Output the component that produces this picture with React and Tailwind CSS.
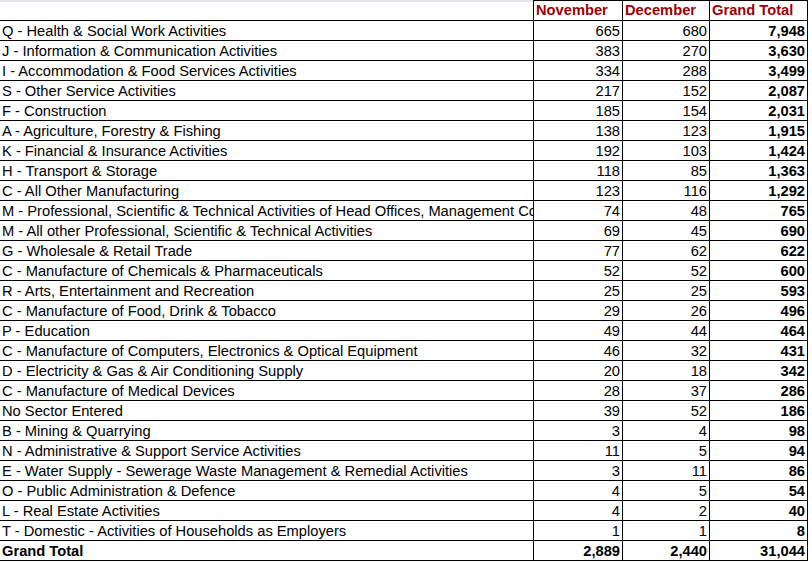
import React from 'react'

const ROWS = [
  ['Q - Health & Social Work Activities', '665', '680', '7,948'],
  ['J - Information & Communication Activities', '383', '270', '3,630'],
  ['I - Accommodation & Food Services Activities', '334', '288', '3,499'],
  ['S - Other Service Activities', '217', '152', '2,087'],
  ['F - Construction', '185', '154', '2,031'],
  ['A - Agriculture, Forestry & Fishing', '138', '123', '1,915'],
  ['K - Financial & Insurance Activities', '192', '103', '1,424'],
  ['H - Transport & Storage', '118', '85', '1,363'],
  ['C - All Other Manufacturing', '123', '116', '1,292'],
  [
    'M - Professional, Scientific & Technical Activities of Head Offices, Management Consultancy',
    '74',
    '48',
    '765',
  ],
  ['M - All other Professional, Scientific & Technical Activities', '69', '45', '690'],
  ['G - Wholesale & Retail Trade', '77', '62', '622'],
  ['C - Manufacture of Chemicals & Pharmaceuticals', '52', '52', '600'],
  ['R - Arts, Entertainment and Recreation', '25', '25', '593'],
  ['C - Manufacture of Food, Drink & Tobacco', '29', '26', '496'],
  ['P - Education', '49', '44', '464'],
  ['C - Manufacture of Computers, Electronics & Optical Equipment', '46', '32', '431'],
  ['D - Electricity & Gas & Air Conditioning Supply', '20', '18', '342'],
  ['C - Manufacture of Medical Devices', '28', '37', '286'],
  ['No Sector Entered', '39', '52', '186'],
  ['B - Mining & Quarrying', '3', '4', '98'],
  ['N - Administrative & Support Service Activities', '11', '5', '94'],
  ['E - Water Supply - Sewerage Waste Management & Remedial Activities', '3', '11', '86'],
  ['O - Public Administration & Defence', '4', '5', '54'],
  ['L - Real Estate Activities', '4', '2', '40'],
  ['T - Domestic - Activities of Households as Employers', '1', '1', '8'],
]

const cellNum = 'h-full border-l border-b border-black flex items-end justify-end pr-[2px]'

function Row({ label, nov, dec, total, bold }) {
  return (
    <div className="flex h-[20px] leading-[17px]">
      <div
        className={`w-[533px] h-full border-b border-black flex items-end pl-[2px] overflow-hidden whitespace-nowrap ${bold ? 'font-bold' : ''}`}
      >
        {label}
      </div>
      <div className={`w-[89px] ${cellNum} ${bold ? 'font-bold' : ''}`}>{nov}</div>
      <div className={`w-[87px] ${cellNum} ${bold ? 'font-bold' : ''}`}>{dec}</div>
      <div className={`w-[99px] ${cellNum} border-r font-bold`}>{total}</div>
    </div>
  )
}

export default function App() {
  return (
    <div className="w-[812px] h-[563px] bg-white text-black text-[14.7px] font-['Liberation_Sans',Arial,sans-serif] overflow-hidden">
      <div className="flex h-[21px] leading-[17px] font-bold text-[#9c0006]">
        <div className="w-[533px] h-full border-t-2 border-t-[#e3e6ec] border-b border-b-black" />
        <div className="w-[89px] h-full border-l border-t border-b border-black flex items-end pl-[2px] pb-[1px] whitespace-nowrap">
          November
        </div>
        <div className="w-[87px] h-full border-l border-t border-b border-black flex items-end pl-[2px] pb-[1px] whitespace-nowrap">
          December
        </div>
        <div className="w-[99px] h-full border-l border-t border-b border-r border-black flex items-end pl-[2px] pb-[1px] whitespace-nowrap">
          Grand Total
        </div>
      </div>
      {ROWS.map(([label, nov, dec, total]) => (
        <Row key={label} label={label} nov={nov} dec={dec} total={total} />
      ))}
      <Row label="Grand Total" nov="2,889" dec="2,440" total="31,044" bold />
    </div>
  )
}
